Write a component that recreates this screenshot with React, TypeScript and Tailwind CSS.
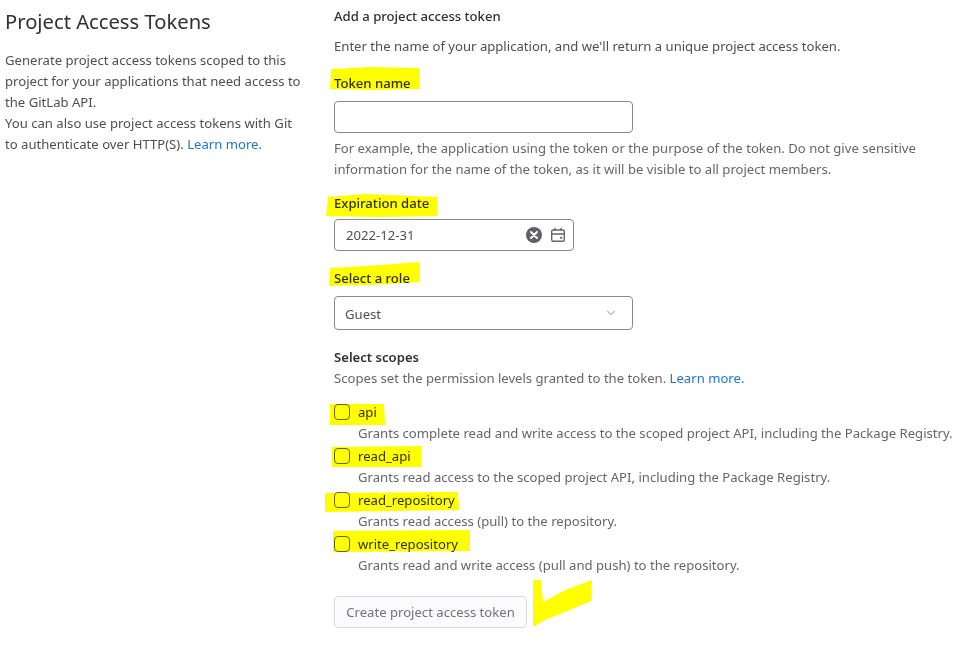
import React from 'react'
import { ChevronDown } from 'lucide-react'

const scopes = [
  {
    name: 'api',
    help: 'Grants complete read and write access to the scoped project API, including the Package Registry.',
  },
  {
    name: 'read_api',
    help: 'Grants read access to the scoped project API, including the Package Registry.',
  },
  { name: 'read_repository', help: 'Grants read access (pull) to the repository.' },
  { name: 'write_repository', help: 'Grants read and write access (pull and push) to the repository.' },
]

const FONT = "font-['Noto_Sans','Open_Sans',sans-serif]"

// the marker strokes someone drew over the screenshot
const Highlights = () => (
  <svg
    className="absolute top-0 left-0 pointer-events-none mix-blend-multiply"
    width="972"
    height="652"
    viewBox="0 0 972 652"
  >
    <g fill="#ffff00">
      <path d="M331 69 L370 67 L419 68 L419 89 L370 90 L330 89 Z" />
      <path d="M328 197 L365 194 L437 197 L437 216 L380 217 L326 216 Z" />
      <path d="M330 268 L380 265 L420 262 L420 282 L370 285 L329 286 Z" />
      <path d="M330 404 L384 404 L385 425 L330 425 Z" />
      <path d="M332 447 L421 446 L422 467 L332 467 Z" />
      <path d="M325 493 L458 492 L459 510 L325 512 Z" />
      <path d="M333 531 L470 530 L470 551 L333 552 Z" />
      <path d="M533 580 L541 580 L543 602 L565 590 L592 580 L591 601 L565 612 L545 620 L533 627 Z" />
    </g>
  </svg>
)

const CalendarIcon = () => (
  <svg width="16" height="16" viewBox="0 0 16 16" fill="none" stroke="#666" strokeWidth="1.4">
    <rect x="1.7" y="3" width="12.6" height="11.3" rx="1.5" />
    <path d="M1.7 7H14.3M5 1v2.5M11 1v2.5" />
    <path d="M10.5 10h1.5v1.5h-1.5z" fill="#666" strokeWidth="0.5" />
  </svg>
)

const ClearIcon = () => (
  <svg width="16" height="16" viewBox="0 0 16 16">
    <circle cx="8" cy="8" r="8" fill="#626168" />
    <path d="M5 5l6 6M11 5l-6 6" stroke="#fff" strokeWidth="2" strokeLinecap="round" />
  </svg>
)

export default function App() {
  return (
    <div className={`relative w-[972px] h-[652px] overflow-hidden bg-white flex text-[13.12px] leading-[21px] text-[#303030] ${FONT}`}>
      {/* Left column */}
      <div className="w-[334px] shrink-0 pl-[5px] pr-[30px]">
        <h4 className="text-[20.2px] leading-[26px] mt-[8px] mb-[16px] font-normal text-[#303030]">Project Access Tokens</h4>
        <p className="text-[#4f4f4f]">
          Generate project access tokens scoped to this project for your applications that need access to the GitLab API.
          <br />
          You can also use project access tokens with Git to authenticate over HTTP(S).{' '}
          <a className="text-[#1f75cb]">Learn more.</a>
        </p>
      </div>

      {/* Right column */}
      <div className="flex-1 min-w-0">
        <h5 className="font-medium mt-[6px] text-[#303030]">Add a project access token</h5>
        <p className="mt-[9px] text-[#4f4f4f]">Enter the name of your application, and we'll return a unique project access token.</p>

        <label className="block font-medium mt-[16px]">Token name</label>
        <input className="block w-[299px] h-[32px] mt-[7px] rounded border border-[#89888d] bg-white" />
        <p className="w-[610px] mt-[5px] text-[#666666]">
          For example, the application using the token or the purpose of the token. Do not give sensitive information for the name of the token, as it will be visible to all project members.
        </p>

        <label className="block font-medium mt-[13px]">Expiration date</label>
        <div className="flex items-center w-[240px] h-[32px] mt-[5px] pl-[11px] pr-[7px] rounded border border-[#89888d] text-[#4f4f4f]">
          <span className="flex-1">2022-12-31</span>
          <div className="flex items-center gap-[8px]">
            <ClearIcon />
            <CalendarIcon />
          </div>
        </div>

        <label className="block font-medium mt-[17px]">Select a role</label>
        <div className="flex items-center justify-between w-[299px] h-[34px] mt-[7px] pl-[10px] pr-[14px] rounded border border-[#89888d] text-[#4f4f4f]">
          <span className="mt-[2px]">Guest</span>
          <ChevronDown size={14} className="text-[#bfbfc3]" />
        </div>

        <h5 className="font-semibold mt-[17px]">Select scopes</h5>
        <p className="text-[#666666]">
          Scopes set the permission levels granted to the token. <a className="text-[#1f75cb]">Learn more.</a>
        </p>

        <div className="mt-[13px] flex flex-col gap-[2px]">
          {scopes.map((scope) => (
            <div key={scope.name} className="flex">
              <span className="w-[16px] h-[16px] mt-[2px] rounded-[4px] border border-[#666666] shrink-0" />
              <div className="pl-[8px]">
                <div className="text-[#303030]">{scope.name}</div>
                <div className="text-[#666666] whitespace-nowrap">{scope.help}</div>
              </div>
            </div>
          ))}
        </div>

        <button className="block w-[193px] h-[32px] mt-[20px] rounded border border-[#dcdcde] bg-[#fbfafd] text-[#737278] text-center">
          Create project access token
        </button>
      </div>

      <Highlights />
    </div>
  )
}
